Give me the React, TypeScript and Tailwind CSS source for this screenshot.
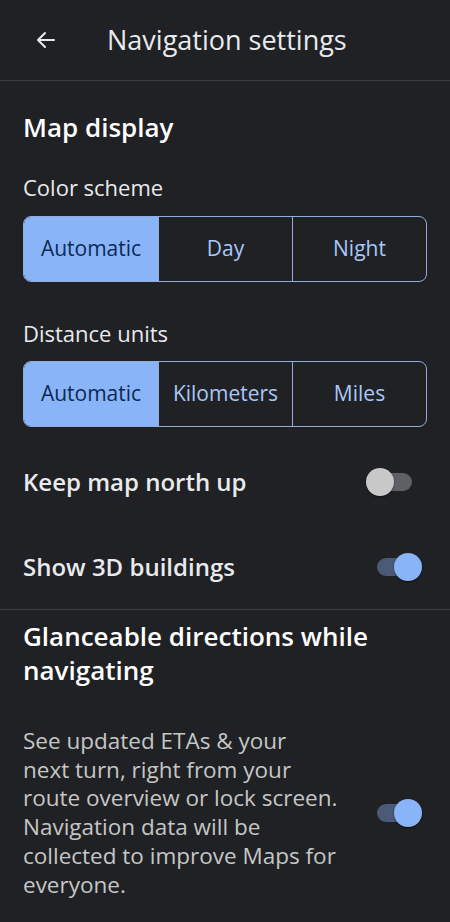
import { useState } from "react";

const font = { fontFamily: "'Open Sans', 'Noto Sans', sans-serif" };

function Segmented({ options, value }: { options: string[]; value: string }) {
  return (
    <div className="mx-[23px] grid h-[66px] grid-cols-3 overflow-hidden rounded-[8px] border border-[#93addb]">
      {options.map((option, index) => (
        <div
          key={option}
          className={
            (index > 0 ? "border-l border-[#93addb] " : "") +
            (option === value
              ? "flex items-center justify-center bg-[#8ab4f8] text-[21px] text-[#0b2a55]"
              : "flex items-center justify-center text-[21px] text-[#a8c7fa]")
          }
        >
          {option}
        </div>
      ))}
    </div>
  );
}

function Toggle({ on }: { on: boolean }) {
  return (
    <div className="relative h-[18px] w-[35px] shrink-0">
      <div
        className={
          on
            ? "absolute inset-0 rounded-full bg-[#4a5a77]"
            : "absolute inset-0 rounded-full bg-[#5f6063]"
        }
      />
      <div
        className={
          on
            ? "absolute top-[-5px] right-[-10px] h-[28px] w-[28px] rounded-full bg-[#8ab4f8] shadow-[0_1px_2px_rgba(0,0,0,0.5)]"
            : "absolute top-[-5px] left-[-11px] h-[28px] w-[28px] rounded-full bg-[#c8c8c8] shadow-[0_1px_2px_rgba(0,0,0,0.5)]"
        }
      />
    </div>
  );
}

export default function App() {
  const [colorScheme] = useState("Automatic");
  const [units] = useState("Automatic");

  return (
    <div className="min-h-[922px] w-[450px] bg-[#202124] text-[#e8eaed]" style={font}>
      <header className="flex h-[81px] items-center border-b border-[#3c3d40]">
        <div className="ml-[34px] flex w-[24px] items-center justify-center">
          <svg width="24" height="24" viewBox="0 0 24 24" fill="none">
            <path
              d="M20 12H4.5M11 5l-7 7 7 7"
              stroke="#e8eaed"
              strokeWidth="2"
              strokeLinecap="round"
              strokeLinejoin="round"
            />
          </svg>
        </div>
        <h1 className="ml-[49px] text-[27px] leading-[34px] text-[#e8eaed]">
          Navigation settings
        </h1>
      </header>

      <div className="px-[23px] pt-[30px] text-[26px] font-semibold leading-[32px] text-white">
        Map display
      </div>
      <div className="px-[23px] pt-[32px] text-[22px] leading-[24px]">Color scheme</div>
      <div className="pt-[17px]">
        <Segmented options={["Automatic", "Day", "Night"]} value={colorScheme} />
      </div>

      <div className="px-[23px] pt-[39px] text-[22px] leading-[24px]">Distance units</div>
      <div className="pt-[16px]">
        <Segmented options={["Automatic", "Kilometers", "Miles"]} value={units} />
      </div>

      <div className="flex h-[84px] items-center justify-between pr-[38px] pl-[23px] pt-[26px]">
        <span className="text-[24px] font-semibold leading-[30px]">Keep map north up</span>
        <Toggle on={false} />
      </div>
      <div className="mt-[13px] flex h-[85px] items-center justify-between pr-[38px] pl-[23px]">
        <span className="text-[24px] font-semibold leading-[30px]">Show 3D buildings</span>
        <Toggle on={true} />
      </div>

      <div className="border-t border-[#3c3d40] px-[23px] pt-[9px]">
        <div className="text-[26px] font-semibold leading-[34px] text-white">
          Glanceable directions while
          <br />
          navigating
        </div>
        <div className="mt-[40px] flex items-center justify-between pr-[15px]">
          <p className="text-[22.5px] leading-[28.7px] text-[#c4c7c5]">
            See updated ETAs &amp; your
            <br />
            next turn, right from your
            <br />
            route overview or lock screen.
            <br />
            Navigation data will be
            <br />
            collected to improve Maps for
            <br />
            everyone.
          </p>
          <Toggle on={true} />
        </div>
      </div>
    </div>
  );
}
